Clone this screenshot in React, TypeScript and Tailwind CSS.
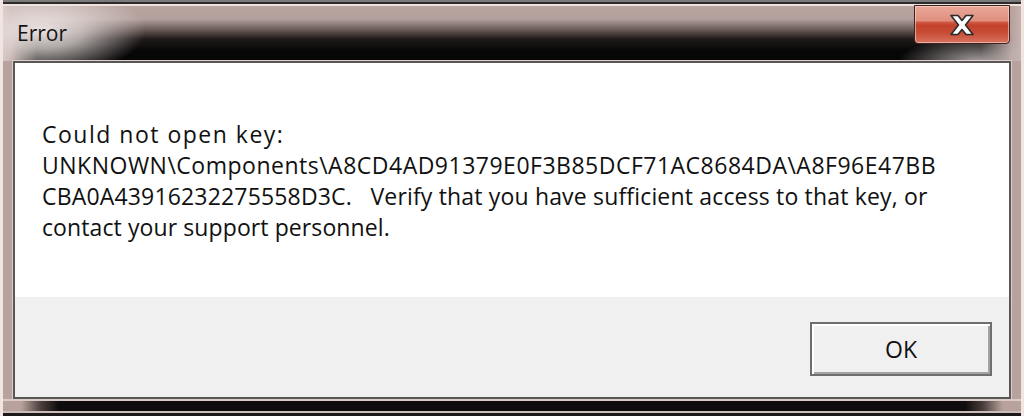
import React from "react";

function CloseGlyph() {
  return (
    <svg width="26" height="22" viewBox="0 0 26 22" aria-hidden="true">
      <polygon
        points="2,1.5 9,1.5 13,6.5 17,1.5 24,1.5 16.5,11 24,20.5 17,20.5 13,15.5 9,20.5 2,20.5 9.5,11"
        fill="#ffffff"
        stroke="#2b2b2b"
        strokeWidth="1.6"
        strokeLinejoin="round"
      />
    </svg>
  );
}

export default function App() {
  return (
    <div className="w-[1024px] h-[416px] flex flex-col overflow-hidden bg-[#b7a29e] border-x-[3px] border-x-[#f1e4e1] font-['Open_Sans',sans-serif]">
      {/* top edge */}
      <div className="h-[6px] shrink-0 bg-[#2e2a2a] border-t-2 border-t-[#7b7b7b] border-b-2 border-b-[#eee2df]" />

      {/* title bar */}
      <div className="h-[55px] shrink-0 flex items-start bg-[radial-gradient(ellipse_105px_46px_at_38px_24px,rgba(238,231,229,0.97)_0%,rgba(228,219,216,0.75)_40%,rgba(205,194,191,0)_100%),radial-gradient(ellipse_80px_26px_at_975px_56px,rgba(196,188,187,0.85)_0%,rgba(196,188,187,0)_100%),linear-gradient(to_right,#cdbcb9_0px,#bba7a3_8px,rgba(183,162,158,0)_34px),linear-gradient(to_left,#c6b2ae_0px,#b7a29e_9px,rgba(183,162,158,0)_40px),linear-gradient(to_bottom,#b8a39f_0px,#b3a09c_13px,#6d5f5c_23px,#201a1a_33px,#080707_44px,#060606_55px)]">
        <span className="pl-[14px] pt-[13px] text-[21px] leading-[28px] text-[#141414]">Error</span>
        <div className="ml-auto mr-[11px] -mt-px w-[96px] h-[39px] rounded-b-[4px] border border-[#3d2320] shadow-[inset_0_0_0_1px_rgba(255,225,215,0.55)] bg-[linear-gradient(to_bottom,#eaa798_0%,#e0907f_40%,#cf5a45_44%,#c4412b_52%,#c64a34_70%,#d9735f_100%)] flex items-center justify-center">
          <CloseGlyph />
        </div>
      </div>

      {/* body */}
      <div className="flex-1 flex px-[10px]">
        <div className="flex-1 flex flex-col border-2 border-[#5a5656] shadow-[0_0_0_1px_#dccfcc]">
          <div className="h-[234px] shrink-0 bg-white pl-[27px] pt-[56px]">
            <div className="text-[23px] leading-[31px] text-[#111111] whitespace-pre">
              <div className="tracking-[1.5px]">{"Could not open key:"}</div>
              <div className="tracking-[0.5px]">{"UNKNOWN\\Components\\A8CD4AD91379E0F3B85DCF71AC8684DA\\A8F96E47BB"}</div>
              <div className="tracking-[0.17px]">{"CBA0A43916232275558D3C.   Verify that you have sufficient access to that key, or"}</div>
              <div className="tracking-[0.1px]">{"contact your support personnel."}</div>
            </div>
          </div>
          <div className="flex-1 bg-[#f0f0f0] flex justify-end items-start pt-[25px] pr-[17px]">
            <button className="w-[182px] h-[54px] border-2 border-[#6e6e6e] bg-[#f0f0f0] shadow-[inset_2px_2px_0_#ffffff,inset_-2px_-2px_0_#a3a3a3] text-[23px] text-[#111111] flex items-center justify-center">
              OK
            </button>
          </div>
        </div>
      </div>

      {/* bottom edge */}
      <div className="h-[17px] shrink-0 flex flex-col">
        <div className="h-[2px] bg-[#d8cbc8]" />
        <div className="h-[10px] bg-[linear-gradient(to_right,#b7a29e_0px,#b7a29e_18px,#4a3d3b_38px,#0e0c0c_56px,#0e0c0c_calc(100%_-_56px),#4a3d3b_calc(100%_-_38px),#b7a29e_calc(100%_-_18px),#b7a29e_100%)]" />
        <div className="h-[2px] bg-[#cbbdba]" />
        <div className="h-[3px] bg-[#1c1a1a]" />
      </div>
    </div>
  );
}
